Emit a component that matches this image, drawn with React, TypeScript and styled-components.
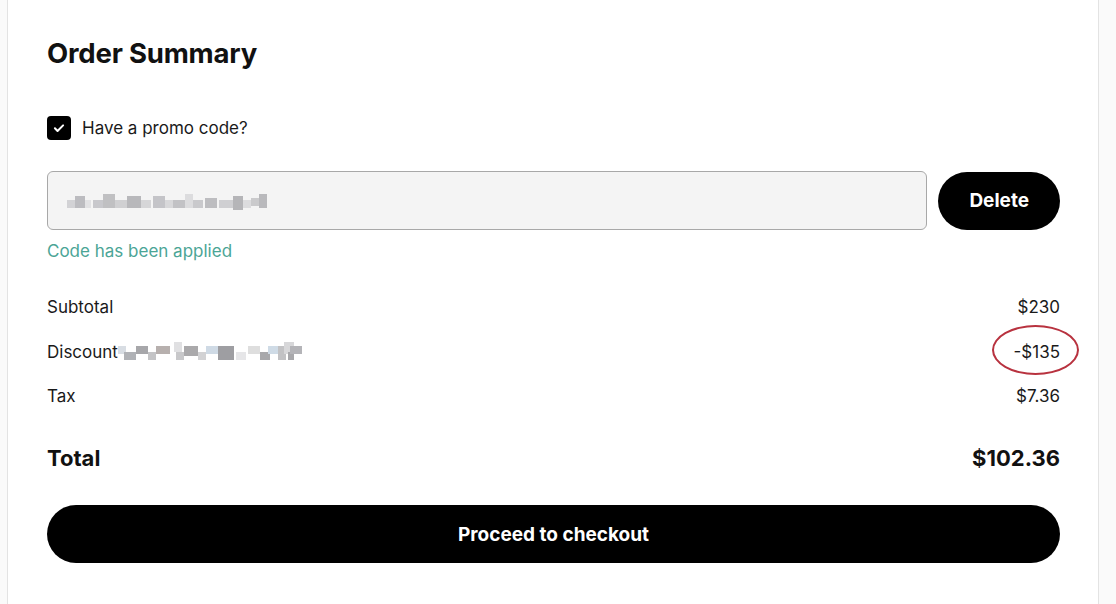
import React from "react";
import styled, { createGlobalStyle } from "styled-components";

const Global = createGlobalStyle`
  html, body { margin: 0; padding: 0; background: #fafafa; }
  body { font-family: Inter, "Noto Sans", sans-serif; color: #111; }
  * { box-sizing: border-box; }
`;

const Page = styled.div`
  display: flex;
  min-height: 604px;
  padding-left: 7px;
`;

const Card = styled.section`
  width: 1092px;
  background: #fff;
  border-left: 1px solid #e3e3e3;
  border-right: 1px solid #e3e3e3;
  padding: 37px 38px 40px 39px;
  display: flex;
  flex-direction: column;
`;

const Title = styled.h2`
  margin: 0;
  font-size: 27.5px;
  font-weight: 700;
  line-height: 32px;
  letter-spacing: -0.2px;
  color: #111;
`;

const CheckRow = styled.label`
  display: flex;
  align-items: center;
  gap: 11px;
  margin-top: 47px;
  font-size: 17px;
  color: #1a1a1a;
`;

const CheckBox = styled.span`
  width: 24px;
  height: 24px;
  border-radius: 4px;
  background: #000;
  display: flex;
  align-items: center;
  justify-content: center;
`;

const PromoRow = styled.div`
  display: flex;
  align-items: center;
  gap: 11px;
  margin-top: 31px;
`;

const PromoInput = styled.div`
  flex: 1;
  height: 59px;
  border: 1px solid #a8a8a8;
  border-radius: 6px;
  background: #f4f4f4;
  display: flex;
  align-items: center;
  padding-left: 19px;
`;

const PillButton = styled.button<{ $wide?: boolean }>`
  height: 58px;
  border: none;
  border-radius: 29px;
  background: #000;
  color: #fff;
  font-family: Inter, "Noto Sans", sans-serif;
  font-weight: 700;
  font-size: 19px;
  padding: 0 31px;
  width: ${(p) => (p.$wide ? "100%" : "auto")};
  cursor: pointer;
`;

const Applied = styled.div`
  margin-top: 11px;
  color: #4ba596;
  font-size: 17px;
  line-height: 20px;
`;

const Lines = styled.div`
  display: flex;
  flex-direction: column;
  gap: 24.5px;
  margin-top: 36px;
`;

const Line = styled.div`
  display: flex;
  justify-content: space-between;
  align-items: center;
  font-size: 17px;
  line-height: 20px;
  color: #1a1a1a;
`;

const LabelWrap = styled.span`
  display: flex;
  align-items: center;
`;

const Amount = styled.span`
  position: relative;
`;

const Ring = styled.span`
  position: absolute;
  left: -22px;
  top: -17px;
  width: 87px;
  height: 50px;
  border: 2px solid #b8323f;
  border-radius: 50%;
  pointer-events: none;
`;

const TotalLine = styled(Line)`
  font-size: 22px;
  font-weight: 700;
  line-height: 26px;
  margin-top: 39px;
  color: #111;
`;

const Checkout = styled.div`
  margin-top: 34px;
`;

type Cell = [number, number, number, number, string];

const Mosaic: React.FC<{ cells: Cell[]; w: number; h: number }> = ({ cells, w, h }) => (
  <svg width={w} height={h} viewBox={`0 0 ${w} ${h}`}>
    {cells.map(([x, y, cw, ch, c], i) => (
      <rect key={i} x={x} y={y} width={cw} height={ch} fill={c} />
    ))}
  </svg>
);

const promoCells: Cell[] = [
  [0, 8, 8, 8, "#d2d2d5"], [8, 4, 10, 12, "#bcbcc0"], [18, 8, 6, 8, "#e2e2e4"],
  [26, 8, 10, 8, "#c8c8cc"], [36, 2, 12, 14, "#c0c0c2"], [48, 8, 12, 8, "#d0d0d2"],
  [60, 4, 14, 12, "#b8b8bb"], [74, 8, 10, 8, "#d6d6d8"], [86, 4, 12, 12, "#c4c4c8"],
  [98, 8, 8, 8, "#d8d8da"], [106, 8, 12, 8, "#c2c2c5"], [118, 2, 8, 14, "#dcdcde"],
  [126, 8, 10, 8, "#c9c9cc"], [138, 6, 12, 10, "#bdbdc0"], [152, 8, 14, 8, "#cfcfd2"],
  [166, 4, 10, 14, "#b5b5b8"], [176, 8, 8, 8, "#dcdcde"], [184, 6, 8, 8, "#cacacc"],
  [192, 2, 8, 14, "#b9b9bc"],
];

const discountCells: Cell[] = [
  [0, 4, 8, 8, "#d8dde3"], [6, 10, 12, 8, "#b0b2b6"], [18, 4, 12, 8, "#a7a7aa"],
  [30, 10, 8, 8, "#c4c4c6"], [38, 4, 14, 8, "#b7b0ae"], [56, 0, 8, 10, "#e0e0e2"],
  [58, 10, 8, 8, "#c8c8ca"], [66, 4, 14, 10, "#aaa9ab"], [80, 10, 8, 8, "#d2d2d4"],
  [88, 4, 12, 8, "#cfdae5"], [100, 4, 16, 14, "#9e9ea2"], [118, 10, 10, 8, "#e6e6e8"],
  [130, 4, 12, 8, "#dedede"], [142, 10, 10, 8, "#a8a8ab"], [150, 4, 10, 8, "#cfdbe6"],
  [160, 4, 8, 14, "#c2c2c4"], [166, 0, 10, 12, "#d7d7d9"], [170, 10, 6, 8, "#a8a8ab"],
  [172, 4, 12, 8, "#b4b4b8"],
];

export default function App() {
  return (
    <>
      <Global />
      <Page>
        <Card>
          <Title>Order Summary</Title>
          <CheckRow>
            <CheckBox>
              <svg width="14" height="14" viewBox="0 0 24 24" fill="none" stroke="#fff" strokeWidth="3.5" strokeLinecap="round" strokeLinejoin="round">
                <path d="M5 12.5l4.5 4.5L19 7.5" />
              </svg>
            </CheckBox>
            Have a promo code?
          </CheckRow>
          <PromoRow>
            <PromoInput>
              <Mosaic w={200} h={18} cells={promoCells} />
            </PromoInput>
            <PillButton>Delete</PillButton>
          </PromoRow>
          <Applied>Code has been applied</Applied>
          <Lines>
            <Line>
              <span>Subtotal</span>
              <span>$230</span>
            </Line>
            <Line>
              <LabelWrap>
                Discount
                <Mosaic w={184} h={20} cells={discountCells} />
              </LabelWrap>
              <Amount>
                -$135
                <Ring />
              </Amount>
            </Line>
            <Line>
              <span>Tax</span>
              <span>$7.36</span>
            </Line>
          </Lines>
          <TotalLine>
            <span>Total</span>
            <span>$102.36</span>
          </TotalLine>
          <Checkout>
            <PillButton $wide>Proceed to checkout</PillButton>
          </Checkout>
        </Card>
      </Page>
    </>
  );
}
